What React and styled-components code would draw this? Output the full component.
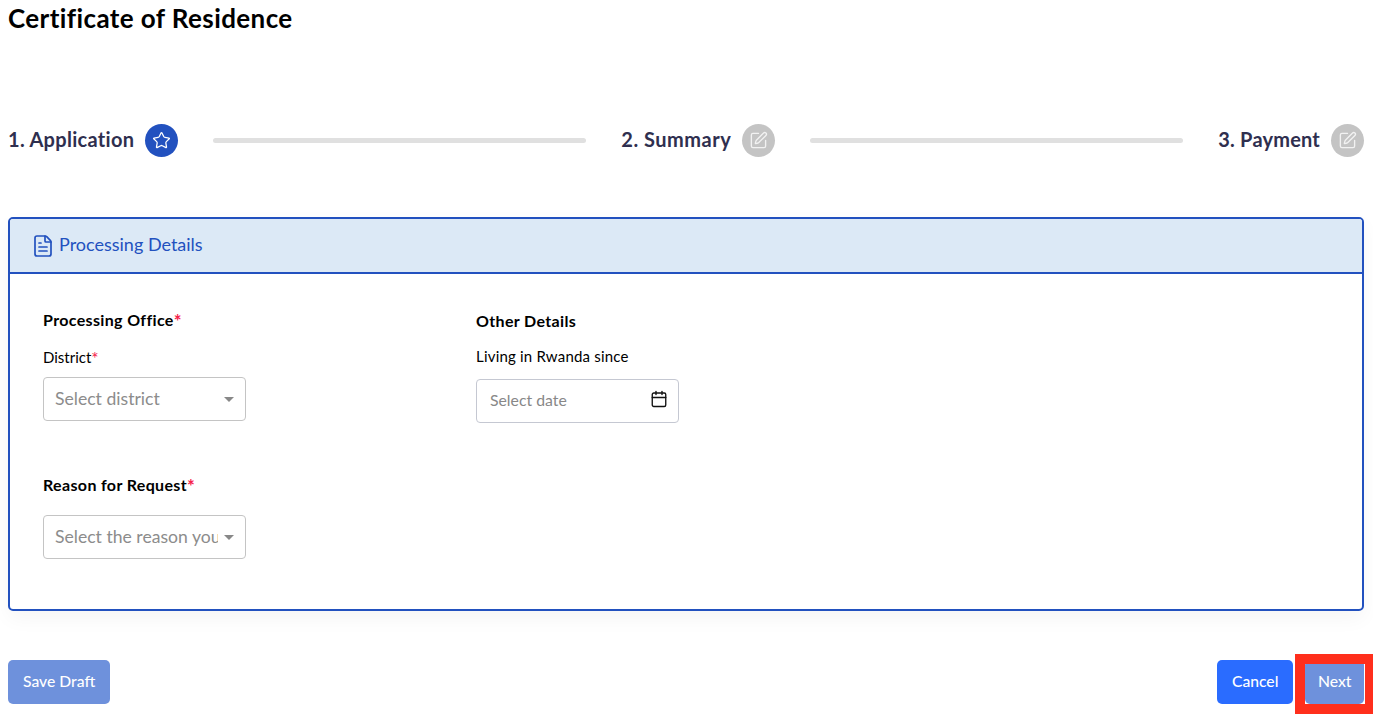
import React from "react";
import styled, { createGlobalStyle } from "styled-components";
import { Star, SquarePen, FileText, Calendar } from "lucide-react";

const GlobalStyle = createGlobalStyle`
    html, body {
        margin: 0;
        padding: 0;
        background: #fff;
        overflow: hidden;
    }
    body {
        font-family: "Lato", "Open Sans", sans-serif;
    }
`;

function Step({ label, active, track, children }) {
    return (
        <StepItem>
            <StepLabel $track={track}>{label}</StepLabel>
            <StepBadge $active={active}>{children}</StepBadge>
        </StepItem>
    );
}

function App() {
    return (
        <Page>
            <GlobalStyle />
            <Title>Certificate of Residence</Title>

            <Stepper>
                <Step label="1. Application" track="0.3px" active>
                    <Star size={19} strokeWidth={1.6} />
                </Step>
                <StepLine />
                <Step label="2. Summary" track="0.5px">
                    <SquarePen size={19} strokeWidth={1.7} />
                </Step>
                <StepLine />
                <Step label="3. Payment" track="0.2px">
                    <SquarePen size={19} strokeWidth={1.7} />
                </Step>
            </Stepper>

            <Card>
                <CardHeader>
                    <FileText size={24} strokeWidth={1.7} />
                    <HeaderText>Processing Details</HeaderText>
                </CardHeader>
                <CardBody>
                    <Column>
                        <SectionTitle>
                            Processing Office<Required>*</Required>
                        </SectionTitle>
                        <FieldLabel>
                            District<Required>*</Required>
                        </FieldLabel>
                        <SelectBox>
                            <SelectText>Select district</SelectText>
                            <Caret />
                        </SelectBox>
                        <SectionTitle $spaced>
                            Reason for Request<Required>*</Required>
                        </SectionTitle>
                        <SelectBox $spaced>
                            <SelectText>Select the reason you</SelectText>
                            <Caret />
                        </SelectBox>
                    </Column>
                    <Column $second>
                        <SectionTitle>Other Details</SectionTitle>
                        <FieldLabel $date>Living in Rwanda since</FieldLabel>
                        <DateBox>
                            <DateText>Select date</DateText>
                            <Calendar size={18} strokeWidth={1.8} color="#111" />
                        </DateBox>
                    </Column>
                </CardBody>
            </Card>

            <Footer>
                <Button $color="#6e91dc">Save Draft</Button>
                <FooterRight>
                    <Button $color="#2a6cff">Cancel</Button>
                    <Highlighted>
                        <Button $color="#6e91dc" $narrow>Next</Button>
                    </Highlighted>
                </FooterRight>
            </Footer>
        </Page>
    );
}

const Page = styled.div`
    width: 1373px;
    height: 717px;
    box-sizing: border-box;
    padding: 0 9px 0 8px;
`;

const Title = styled.h1`
    margin: 0;
    padding-top: 2px;
    height: 33px;
    font-size: 26px;
    line-height: 33px;
    letter-spacing: 0.4px;
    font-weight: 700;
    color: #000;
`;

const Stepper = styled.div`
    display: flex;
    align-items: center;
    gap: 35px;
    height: 33px;
    margin-top: 89px;
`;

const StepItem = styled.div`
    display: flex;
    align-items: center;
    gap: 11px;
`;

const StepLabel = styled.span`
    padding-bottom: 3px;
    font-size: 20px;
    letter-spacing: ${(p) => p.$track};
    font-weight: 700;
    color: #2f2f4f;
    white-space: nowrap;
`;

const StepBadge = styled.div`
    width: 33px;
    height: 33px;
    border-radius: 50%;
    display: flex;
    align-items: center;
    justify-content: center;
    color: ${(p) => (p.$active ? "#fff" : "#f2f2f2")};
    background: ${(p) => (p.$active ? "#2251bf" : "#c4c4c4")};
`;

const StepLine = styled.div`
    flex: 1;
    height: 5px;
    border-radius: 3px;
    background: #e0e0e0;
`;

const Card = styled.section`
    box-sizing: border-box;
    height: 394px;
    margin-top: 60px;
    border: 2px solid #2251bf;
    border-radius: 5px;
    box-shadow: 0 8px 20px rgba(0, 0, 0, 0.04);
    overflow: hidden;
`;

const CardHeader = styled.header`
    box-sizing: border-box;
    height: 55px;
    display: flex;
    align-items: center;
    gap: 4px;
    padding-left: 21px;
    background: #dce9f6;
    border-bottom: 2px solid #2251bf;
    color: #2251bf;
    font-size: 18px;
`;

const HeaderText = styled.span`
    padding-bottom: 3px;
`;

const CardBody = styled.div`
    display: grid;
    grid-template-columns: 433px 203px;
    padding: 35px 33px 0;
`;

const Column = styled.div`
    display: flex;
    flex-direction: column;
    padding-top: ${(p) => (p.$second ? "1px" : "0")};
`;

const SectionTitle = styled.div`
    font-size: 16px;
    line-height: 22px;
    letter-spacing: 0.35px;
    font-weight: 700;
    color: #000;
    margin-top: ${(p) => (p.$spaced ? "53px" : "0")};
`;

const Required = styled.span`
    color: #f5224a;
    font-size: 1.15em;
    line-height: 0;
    vertical-align: -2px;
`;

const FieldLabel = styled.div`
    font-size: 15px;
    line-height: 20px;
    letter-spacing: ${(p) => (p.$date ? "0.2px" : "0")};
    color: #000;
    margin: ${(p) => (p.$date ? "14px 0 12px" : "16px 0 10px")};
    padding-bottom: ${(p) => (p.$date ? "1px" : "0")};
`;

const SelectBox = styled.div`
    box-sizing: border-box;
    width: 203px;
    height: 44px;
    display: flex;
    align-items: center;
    gap: 6px;
    padding: 0 11px;
    border: 1px solid #c4c4c4;
    border-radius: 4px;
    margin-top: ${(p) => (p.$spaced ? "19px" : "0")};
`;

const SelectText = styled.span`
    flex: 1;
    min-width: 0;
    overflow: hidden;
    white-space: nowrap;
    padding-bottom: 2px;
    font-size: 17.6px;
    color: #8c8c8c;
`;

const Caret = styled.i`
    flex: none;
    width: 0;
    height: 0;
    border-left: 5px solid transparent;
    border-right: 5px solid transparent;
    border-top: 5px solid #888;
`;

const DateBox = styled.div`
    box-sizing: border-box;
    width: 203px;
    height: 44px;
    display: flex;
    align-items: center;
    justify-content: space-between;
    padding: 0 10px 0 13px;
    border: 1px solid #c5c8d2;
    border-radius: 4px;

    svg {
        margin-bottom: 4px;
    }
`;

const DateText = styled.span`
    padding-bottom: 3px;
    font-size: 15.8px;
    color: #888;
`;

const Footer = styled.footer`
    display: flex;
    justify-content: space-between;
    margin-top: 49px;
`;

const FooterRight = styled.div`
    display: flex;
    gap: 12px;
`;

const Button = styled.button`
    height: 44px;
    padding: 0 ${(p) => (p.$narrow ? "12.5px" : "15px")} 2px;
    border: none;
    border-radius: 5px;
    background: ${(p) => p.$color};
    color: #fff;
    font-family: inherit;
    font-size: 15.7px;
    font-weight: 500;
`;

// red marker laid over the Next button in the screenshot
const Highlighted = styled.div`
    position: relative;
    display: flex;

    &::after {
        content: "";
        position: absolute;
        top: -6px;
        left: -10px;
        right: -9px;
        bottom: -10px;
        border: 10px solid #ff2f1c;
        border-right-width: 8px;
    }
`;

export default App;
